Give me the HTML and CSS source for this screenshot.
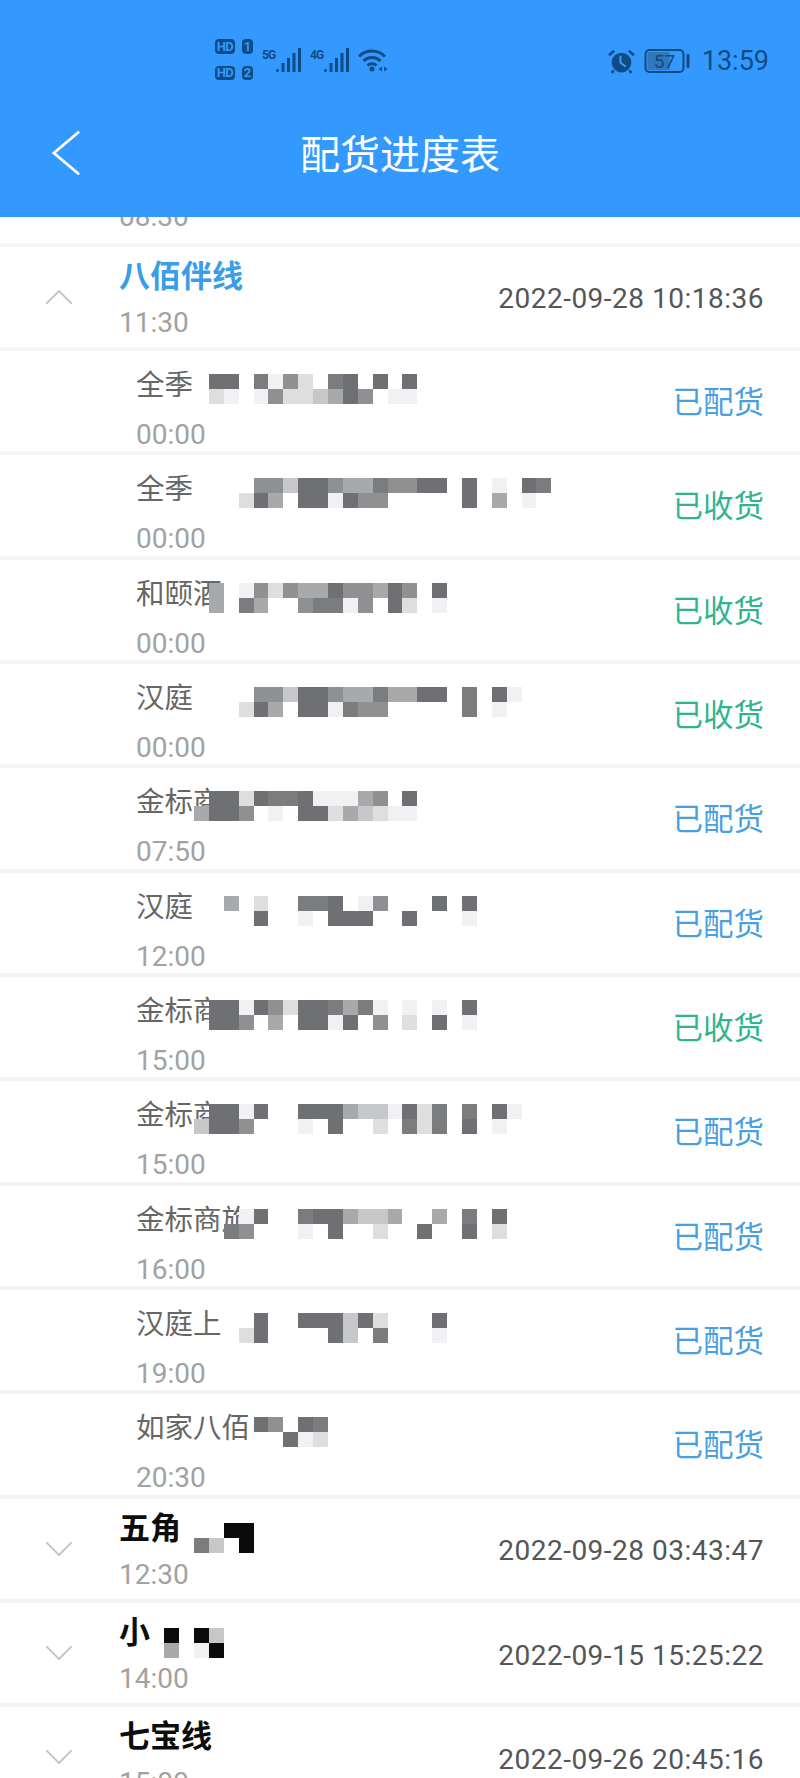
FILE: index.html
```html
<!DOCTYPE html>
<html lang="zh-CN">
<head>
<meta charset="utf-8">
<title>配货进度表</title>
<link rel="stylesheet" href="styles.css">
</head>
<body>
<div class="app">
  <header class="top">
    <div class="status">
      <div class="status-left">
        <div class="sims">
          <div class="sim"><span class="badge hd">HD</span><span class="badge num">1</span></div>
          <div class="sim"><span class="badge hd">HD</span><span class="badge num">2</span></div>
        </div>
        <div class="net"><span class="net-type">5G</span>
          <svg class="signal" viewBox="0 0 25 24"><circle cx="1.5" cy="22.5" r="1.5"/><rect x="5.5" y="15" width="3" height="9"/><rect x="11" y="10" width="3" height="14"/><rect x="16.5" y="5" width="3" height="19"/><rect x="22" y="0" width="3" height="24"/></svg>
        </div>
        <div class="net"><span class="net-type">4G</span>
          <svg class="signal" viewBox="0 0 25 24"><circle cx="1.5" cy="22.5" r="1.5"/><rect x="5.5" y="15" width="3" height="9"/><rect x="11" y="10" width="3" height="14"/><rect x="16.5" y="5" width="3" height="19"/><rect x="22" y="0" width="3" height="24"/></svg>
        </div>
        <svg class="wifi" viewBox="0 0 30 24"><path d="M1 8.5a18 18 0 0 1 26 0M5.5 13a12 12 0 0 1 17 0M9.5 17.5a6.500 6.500 0 0 1 9 0"/><circle cx="14" cy="21" r="2.500"/><polygon points="24,18.500 20.500,21 24,23.500"/><polygon points="26,18.500 29.500,21 26,23.500"/></svg>
      </div>
      <div class="status-right">
        <svg class="alarm" viewBox="0 0 26 24"><circle cx="13" cy="13" r="9.500"/><path class="alarm-ear" d="M1 6 6 1.500M25 6 20 1.500M5.500 20.500 3.500 23M20.500 20.500 22.500 23"/><path class="alarm-hand" d="M12 6.500V13l5 4"/></svg>
        <svg class="battery" viewBox="0 0 45 24"><rect class="batt-fill" x="3" y="3" width="22" height="18"/><rect class="batt-case" x="1" y="1" width="38" height="22" rx="4"/><rect class="batt-nub" x="42" y="5" width="3" height="14" rx="1"/><text class="batt-text" x="20" y="18.500" text-anchor="middle">57</text></svg>
        <span class="clock">13:59</span>
      </div>
    </div>
    <nav class="nav">
      <svg class="back" viewBox="0 0 30 48"><polyline points="28,2 2,24 28,46"/></svg>
      <h1 class="nav-title">配货进度表</h1>
    </nav>
  </header>

  <main class="list">
    <div class="cut-row"><span class="time">08:30</span></div>

    <section class="row group">
      <div class="group-left">
        <svg class="chev" viewBox="0 0 26 14"><polyline points="0,14 13,1 26,14"/></svg>
        <div class="info"><div class="title open">八佰伴线</div><div class="time">11:30</div></div>
      </div>
      <span class="date">2022-09-28 10:18:36</span>
    </section>

    <section class="row item">
      <div class="info"><div class="name">全季</div><div class="time">00:00</div></div>
      <span class="state sent">已配货</span>
      <div class="mosaic">
        <b><i></i><i class="c7"></i><i class="c7"></i><i></i><i class="c6"></i><i class="c1"></i><i class="c5"></i><i class="c2"></i><i></i><i class="c6"></i><i class="c7"></i><i></i><i class="c7"></i><i></i><i class="c7"></i></b>
        <b><i></i><i class="c2"></i><i class="c1"></i><i></i><i class="c1"></i><i class="c5"></i><i class="c2"></i><i class="c2"></i><i class="c3"></i><i class="c4"></i><i class="c7"></i><i class="c5"></i><i></i><i class="c1"></i><i class="c1"></i></b>
      </div>
    </section>

    <section class="row item">
      <div class="info"><div class="name">全季</div><div class="time">00:00</div></div>
      <span class="state got">已收货</span>
      <div class="mosaic">
        <b><i></i><i></i><i></i><i></i><i class="c5"></i><i class="c5"></i><i class="c3"></i><i class="c7"></i><i class="c7"></i><i class="c5"></i><i class="c4"></i><i class="c4"></i><i class="c6"></i><i class="c5"></i><i class="c5"></i><i class="c7"></i><i class="c7"></i><i></i><i class="c7"></i><i></i><i class="c1"></i><i></i><i class="c7"></i><i class="c6"></i></b>
        <b><i></i><i></i><i></i><i class="c2"></i><i class="c7"></i><i class="c4"></i><i></i><i class="c7"></i><i class="c7"></i><i class="c1"></i><i class="c7"></i><i class="c5"></i><i class="c5"></i><i></i><i></i><i></i><i></i><i></i><i class="c7"></i><i></i><i class="c4"></i><i></i><i class="c1"></i></b>
      </div>
    </section>

    <section class="row item">
      <div class="info"><div class="name">和颐酒</div><div class="time">00:00</div></div>
      <span class="state got">已收货</span>
      <div class="mosaic">
        <b><i></i><i class="c4"></i><i></i><i class="c1"></i><i class="c5"></i><i class="c2"></i><i class="c5"></i><i class="c4"></i><i class="c4"></i><i class="c7"></i><i class="c5"></i><i class="c5"></i><i class="c4"></i><i class="c7"></i><i class="c5"></i><i></i><i class="c7"></i></b>
        <b><i></i><i class="c4"></i><i></i><i class="c6"></i><i class="c4"></i><i></i><i></i><i class="c5"></i><i class="c6"></i><i class="c6"></i><i class="c1"></i><i class="c5"></i><i></i><i class="c7"></i><i class="c2"></i><i></i><i class="c1"></i></b>
      </div>
    </section>

    <section class="row item">
      <div class="info"><div class="name">汉庭</div><div class="time">00:00</div></div>
      <span class="state got">已收货</span>
      <div class="mosaic">
        <b><i></i><i></i><i></i><i></i><i class="c5"></i><i class="c5"></i><i class="c3"></i><i class="c7"></i><i class="c7"></i><i class="c5"></i><i class="c4"></i><i class="c4"></i><i class="c6"></i><i class="c4"></i><i class="c4"></i><i class="c7"></i><i class="c7"></i><i></i><i class="c6"></i><i></i><i class="c7"></i><i class="c1"></i></b>
        <b><i></i><i></i><i></i><i class="c2"></i><i class="c7"></i><i class="c4"></i><i></i><i class="c7"></i><i class="c7"></i><i class="c1"></i><i class="c6"></i><i class="c5"></i><i class="c5"></i><i></i><i></i><i></i><i></i><i></i><i class="c6"></i><i></i><i class="c1"></i></b>
      </div>
    </section>

    <section class="row item">
      <div class="info"><div class="name">金标商</div><div class="time">07:50</div></div>
      <span class="state sent">已配货</span>
      <div class="mosaic">
        <b><i></i><i class="c7"></i><i class="c7"></i><i class="c2"></i><i class="c7"></i><i class="c6"></i><i class="c6"></i><i class="c7"></i><i class="c1"></i><i class="c1"></i><i class="c1"></i><i class="c4"></i><i class="c5"></i><i></i><i class="c7"></i></b>
        <b><i class="c4"></i><i class="c7"></i><i class="c7"></i><i class="c5"></i><i></i><i class="c1"></i><i></i><i class="c7"></i><i class="c7"></i><i class="c2"></i><i class="c4"></i><i class="c3"></i><i class="c2"></i><i class="c1"></i><i class="c1"></i></b>
      </div>
    </section>

    <section class="row item">
      <div class="info"><div class="name">汉庭</div><div class="time">12:00</div></div>
      <span class="state sent">已配货</span>
      <div class="mosaic">
        <b><i></i><i></i><i class="c4"></i><i></i><i class="c2"></i><i></i><i></i><i class="c6"></i><i class="c6"></i><i class="c7"></i><i></i><i class="c1"></i><i class="c5"></i><i></i><i></i><i></i><i class="c7"></i><i></i><i class="c7"></i></b>
        <b><i></i><i></i><i></i><i></i><i class="c7"></i><i></i><i></i><i class="c1"></i><i></i><i class="c7"></i><i class="c7"></i><i class="c7"></i><i></i><i></i><i class="c7"></i><i></i><i></i><i></i><i class="c1"></i></b>
      </div>
    </section>

    <section class="row item">
      <div class="info"><div class="name">金标商</div><div class="time">15:00</div></div>
      <span class="state got">已收货</span>
      <div class="mosaic">
        <b><i></i><i class="c7"></i><i class="c7"></i><i class="c1"></i><i class="c7"></i><i class="c5"></i><i class="c2"></i><i class="c7"></i><i class="c7"></i><i class="c6"></i><i class="c4"></i><i class="c6"></i><i class="c1"></i><i></i><i class="c1"></i><i></i><i class="c1"></i><i></i><i class="c7"></i></b>
        <b><i></i><i class="c7"></i><i class="c7"></i><i class="c5"></i><i></i><i class="c4"></i><i></i><i class="c7"></i><i class="c7"></i><i class="c1"></i><i class="c7"></i><i></i><i class="c5"></i><i></i><i class="c2"></i><i></i><i class="c7"></i><i></i><i class="c1"></i></b>
      </div>
    </section>

    <section class="row item">
      <div class="info"><div class="name">金标商</div><div class="time">15:00</div></div>
      <span class="state sent">已配货</span>
      <div class="mosaic">
        <b><i></i><i class="c7"></i><i class="c7"></i><i class="c1"></i><i class="c7"></i><i></i><i></i><i class="c7"></i><i class="c7"></i><i class="c7"></i><i class="c4"></i><i class="c3"></i><i class="c3"></i><i class="c1"></i><i class="c7"></i><i class="c2"></i><i class="c6"></i><i></i><i class="c6"></i><i></i><i class="c7"></i><i class="c1"></i></b>
        <b><i class="c3"></i><i class="c7"></i><i class="c7"></i><i class="c5"></i><i></i><i></i><i></i><i class="c1"></i><i></i><i class="c7"></i><i></i><i></i><i class="c2"></i><i></i><i class="c6"></i><i class="c2"></i><i class="c6"></i><i></i><i class="c7"></i><i></i><i class="c1"></i></b>
      </div>
    </section>

    <section class="row item">
      <div class="info"><div class="name">金标商旅</div><div class="time">16:00</div></div>
      <span class="state sent">已配货</span>
      <div class="mosaic">
        <b><i></i><i></i><i></i><i class="c1"></i><i class="c7"></i><i></i><i></i><i class="c6"></i><i class="c7"></i><i class="c7"></i><i class="c4"></i><i class="c3"></i><i class="c3"></i><i class="c4"></i><i></i><i></i><i class="c4"></i><i></i><i class="c6"></i><i></i><i class="c7"></i></b>
        <b><i></i><i></i><i class="c6"></i><i class="c5"></i><i></i><i></i><i></i><i class="c1"></i><i></i><i class="c7"></i><i></i><i></i><i class="c2"></i><i></i><i></i><i class="c7"></i><i></i><i></i><i class="c7"></i><i></i><i class="c2"></i></b>
      </div>
    </section>

    <section class="row item">
      <div class="info"><div class="name">汉庭上</div><div class="time">19:00</div></div>
      <span class="state sent">已配货</span>
      <div class="mosaic">
        <b><i></i><i></i><i></i><i></i><i class="c7"></i><i></i><i></i><i class="c7"></i><i class="c7"></i><i class="c7"></i><i class="c3"></i><i class="c7"></i><i class="c2"></i><i></i><i></i><i></i><i class="c7"></i></b>
        <b><i></i><i></i><i></i><i class="c2"></i><i class="c7"></i><i></i><i></i><i></i><i></i><i class="c7"></i><i class="c3"></i><i></i><i class="c6"></i><i></i><i></i><i></i><i class="c1"></i></b>
      </div>
    </section>

    <section class="row item">
      <div class="info"><div class="name">如家八佰</div><div class="time">20:30</div></div>
      <span class="state sent">已配货</span>
      <div class="mosaic">
        <b><i></i><i></i><i></i><i></i><i class="c7"></i><i class="c5"></i><i></i><i class="c7"></i><i class="c6"></i></b>
        <b><i></i><i></i><i></i><i></i><i></i><i></i><i class="c7"></i><i class="c1"></i><i class="c2"></i></b>
      </div>
    </section>

    <section class="row group">
      <div class="group-left">
        <svg class="chev" viewBox="0 0 26 14"><polyline points="0,0 13,13 26,0"/></svg>
        <div class="info"><div class="title">五角</div><div class="time">12:30</div></div>
      </div>
      <span class="date">2022-09-28 03:43:47</span>
      <div class="mosaic mosaic-title">
        <b><i></i><i></i><i class="c8"></i><i class="c8"></i></b>
        <b><i class="c6"></i><i class="c3"></i><i></i><i class="c8"></i></b>
      </div>
    </section>

    <section class="row group">
      <div class="group-left">
        <svg class="chev" viewBox="0 0 26 14"><polyline points="0,0 13,13 26,0"/></svg>
        <div class="info"><div class="title">小</div><div class="time">14:00</div></div>
      </div>
      <span class="date">2022-09-15 15:25:22</span>
      <div class="mosaic mosaic-far">
        <b><i class="c8"></i><i></i><i class="c8"></i><i class="c3"></i></b>
        <b><i class="c4"></i><i></i><i class="c1"></i><i class="c8"></i></b>
      </div>
    </section>

    <section class="row group">
      <div class="group-left">
        <svg class="chev" viewBox="0 0 26 14"><polyline points="0,0 13,13 26,0"/></svg>
        <div class="info"><div class="title">七宝线</div><div class="time">15:00</div></div>
      </div>
      <span class="date">2022-09-26 20:45:16</span>
    </section>
  </main>
</div>
</body>
</html>
```
FILE: styles.css
```css
* { box-sizing: border-box; }
html, body { margin: 0; padding: 0; }
body {
  width: 800px;
  height: 1778px;
  overflow: hidden;
  background: #fff;
  font-family: Roboto, "Noto Sans CJK SC", sans-serif;
}
.app { display: flex; flex-direction: column; height: 1778px; overflow: hidden; }

/* header */
.top { flex: none; height: 217px; background: #3399ff; }
.status {
  height: 102px;
  padding: 39px 31px 0 215px;
  display: flex;
  justify-content: space-between;
  align-items: flex-start;
  color: #0f4c84;
}
.status-left { height: 41px; display: flex; align-items: center; gap: 9px; }
.sims { display: flex; flex-direction: column; gap: 12px; }
.sim { display: flex; gap: 7px; }
.badge {
  height: 14.500px;
  display: flex;
  align-items: center;
  justify-content: center;
  border-radius: 4px;
  background: #0f4c84;
  color: #3399ff;
  font-size: 13px;
  font-weight: 700;
}
.hd { width: 20px; letter-spacing: -.5px; }
.num { width: 11px; }
.net { display: flex; align-items: flex-start; gap: 2px; height: 24px; }
.net-type { font-size: 12px; font-weight: 700; line-height: 14px; letter-spacing: -1px; width: 12px; }
.signal { width: 25px; height: 24px; fill: #0f4c84; }
.wifi { width: 30px; height: 24px; fill: #0f4c84; }
.wifi path { fill: none; stroke: #0f4c84; stroke-width: 3; }
.status-right { height: 32px; margin-top: 6px; display: flex; align-items: center; gap: 9px; }
.alarm { width: 27px; height: 25px; fill: #0f4c84; }
.alarm-ear { fill: none; stroke: #0f4c84; stroke-width: 2.500; }
.alarm-hand { fill: none; stroke: #3399ff; stroke-width: 2; }
.battery { width: 46px; height: 24px; }
.batt-fill { fill: #3077bb; }
.batt-case { fill: none; stroke: #0f4c84; stroke-width: 2; }
.batt-nub { fill: #0f4c84; }
.batt-text { font-size: 19px; fill: #0f4c84; font-family: Roboto, sans-serif; }
.clock { margin-left: 3px; font-size: 27px; line-height: 32px; }

.nav {
  height: 115px;
  margin-top: -4px;
  padding-left: 52px;
  display: grid;
  grid-template-columns: 148px 200px;
  column-gap: 100px;
  align-items: center;
}
.back { width: 28px; height: 46px; margin-bottom: 6px; fill: none; stroke: #fff; stroke-width: 3; }
.back polyline { stroke-linecap: round; }
.nav-title {
  margin: 0;
  font-size: 40px;
  font-weight: 400;
  line-height: 50px;
  color: #fff;
  white-space: nowrap;
}

/* list */
.list {
  flex: 1;
  min-height: 0;
  display: flex;
  flex-direction: column;
  gap: 4px;
  background: #f4f4f4;
  overflow: hidden;
}
.cut-row {
  flex: none;
  height: 25.670px;
  padding: 0 0 10px 119px;
  display: flex;
  align-items: flex-end;
  background: #fff;
  overflow: hidden;
}
.row {
  position: relative;
  flex: none;
  height: 100.330px;
  display: flex;
  justify-content: space-between;
  align-items: center;
  background: #fff;
}
.group { padding: 0 36px 0 46px; }
.item { padding: 0 36px 0 136px; }
.group-left { display: flex; align-items: center; gap: 47px; }
.chev { width: 26px; height: 14px; fill: none; stroke: #c6c6c6; stroke-width: 2; }
.info { display: flex; flex-direction: column; }
.group .info { height: 100px; padding-top: 10px; }
.item .info { height: 100px; padding-top: 15px; }
.title { font-size: 31px; line-height: 40px; font-weight: 700; color: #0d0d0d; }
.title.open { color: #3a9de8; }
.name { font-size: 28.500px; line-height: 40px; color: #666; white-space: nowrap; }
.time { font-size: 28px; line-height: 32px; color: #a2a2a2; white-space: nowrap; }
.group .time { margin-top: 10px; }
.item .time { margin-top: 13px; }
.date { padding-top: 4px; font-size: 28px; letter-spacing: .5px; color: #555558; white-space: nowrap; }
.state { padding-top: 4px; font-size: 30.500px; line-height: 40px; }
.sent { color: #4a9fdf; }
.got { color: #2fb48f; }

/* pixelated censor blocks over names */
.mosaic {
  position: absolute;
  left: 194px;
  top: 23px;
  display: flex;
  flex-direction: column;
}
.mosaic-title { top: 24px; }
.mosaic-far { left: 164px; top: 25px; }
.mosaic b { display: flex; height: 15px; }
.mosaic i { flex: none; width: 14.900px; height: 15px; }
.c1 { background: #f1f1f3; }
.c2 { background: #dedede; }
.c3 { background: #c6c7c8; }
.c4 { background: #a8a9aa; }
.c5 { background: #8f9092; }
.c6 { background: #7b7c7d; }
.c7 { background: #6f7073; }
.c8 { background: #0b0b0b; }
```
